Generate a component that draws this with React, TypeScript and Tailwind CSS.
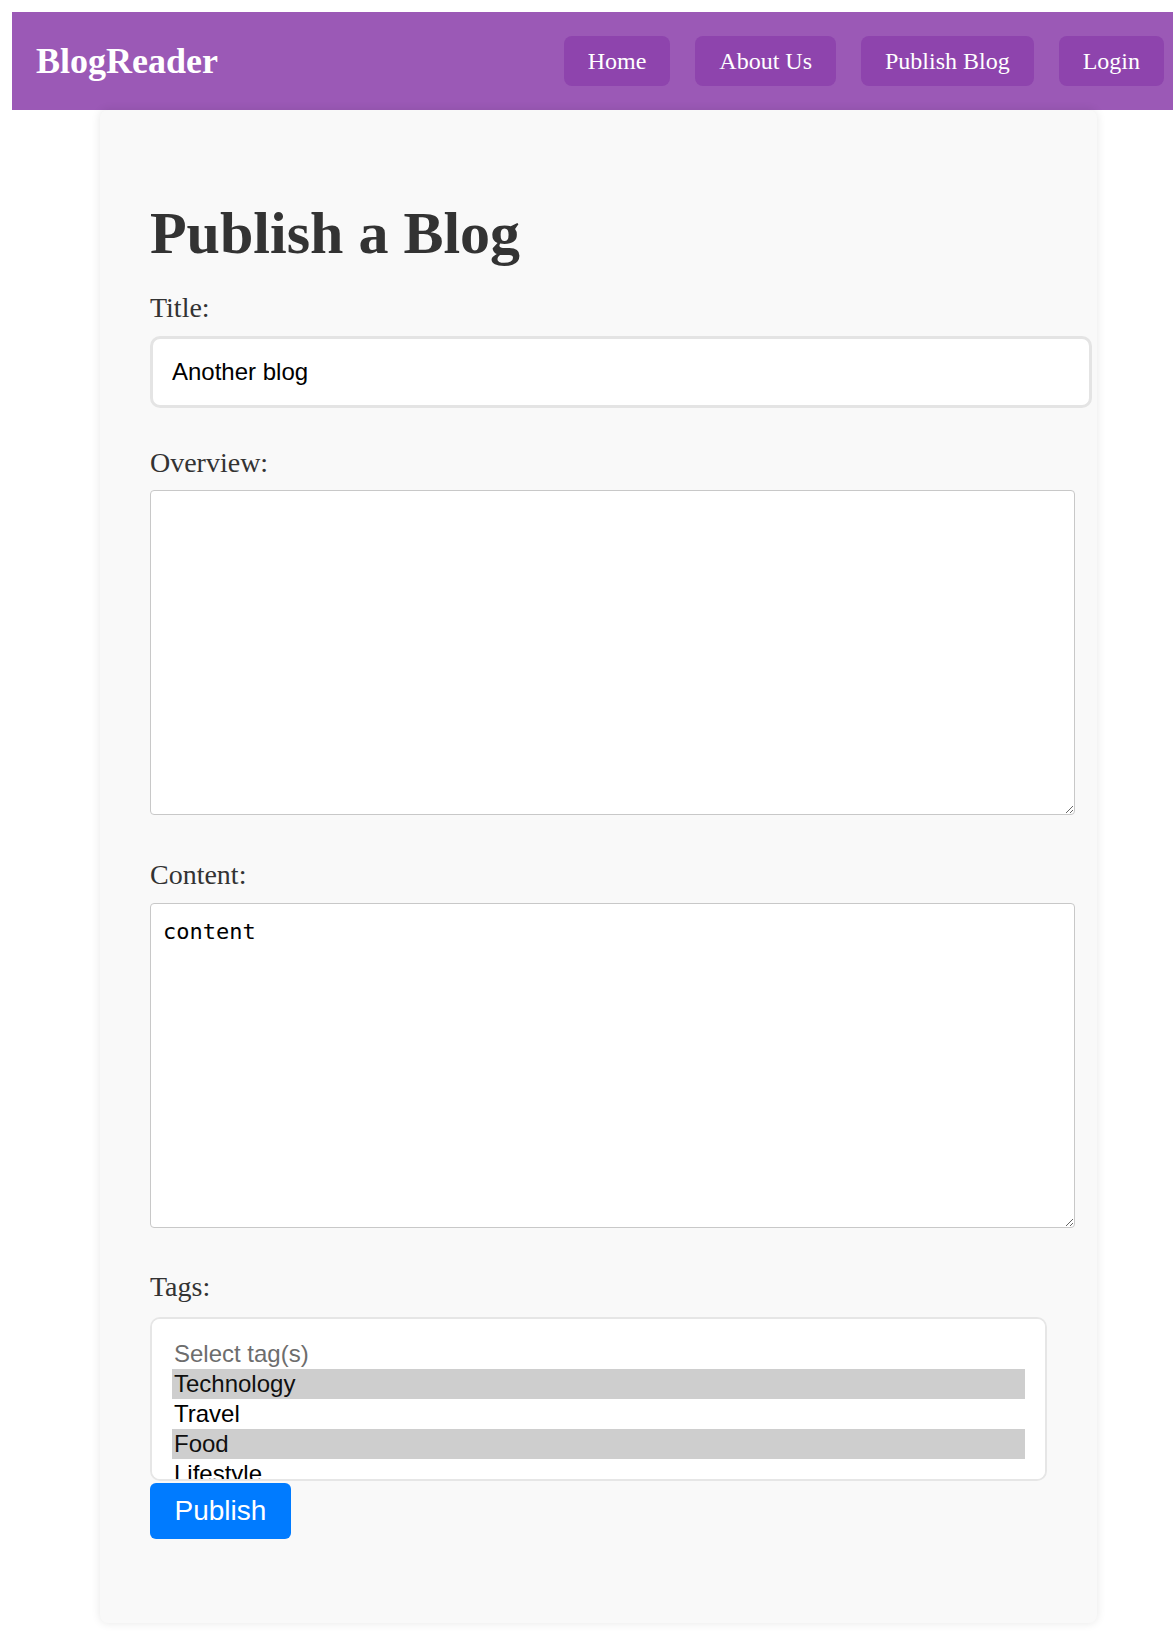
import { useState } from "react";

const LINKS = ["Home", "About Us", "Publish Blog", "Login"];

const TAGS = ["Technology", "Travel", "Food", "Lifestyle", "Health", "Education"];

export default function App() {
  const [title, setTitle] = useState("Another blog");
  const [overview, setOverview] = useState("");
  const [content, setContent] = useState("content");

  return (
    <div className="overflow-hidden bg-white">
      <div className="ml-3 mt-3 mb-3 w-full">
        {/* Top bar */}
        <nav className="flex items-center justify-between bg-[#9b59b6] py-6 pl-6 pr-[21px] font-['Liberation_Serif',serif] text-white">
          <span className="text-[36px] font-bold leading-[41px]">BlogReader</span>
          <div className="flex gap-[25px]">
            {LINKS.map(l => (
              <a
                key={l}
                href="#"
                className="rounded-lg bg-[#8e44ad] px-6 py-3 text-[24px] leading-[26px] text-white"
              >
                {l}
              </a>
            ))}
          </div>
        </nav>

        {/* Form card */}
        <div className="mx-auto w-[85%] rounded-lg bg-[#f9f9f9] px-[50px] pt-[93px] pb-[84px] shadow-[0_0_10px_rgba(0,0,0,0.1)]">
          <h1 className="font-['Liberation_Serif',serif] text-[60px] font-bold leading-[60px] text-[#333]">
            Publish a Blog
          </h1>

          <form className="flex flex-col font-['Liberation_Serif',serif] text-[#333]" onSubmit={e => e.preventDefault()}>
            <label htmlFor="title" className="mt-[29px] mb-[12px] block text-[28px] leading-[32px]">Title:</label>
            <input
              id="title"
              value={title}
              onChange={e => setTitle(e.target.value)}
              className="h-[72px] w-[942px] rounded-[10px] border-[3px] border-[#e4e4e4] bg-white px-[19px] font-['Liberation_Sans',Arial,sans-serif] text-[24px] text-black outline-none"
            />

            <label htmlFor="overview" className="mt-[39px] mb-[11px] block text-[28px] leading-[32px]">Overview:</label>
            <textarea
              id="overview"
              value={overview}
              onChange={e => setOverview(e.target.value)}
              className="block h-[325px] w-[925px] rounded-[4px] border border-[#c8c8c8] bg-white p-3 font-['DejaVu_Sans_Mono',monospace] text-[22px] text-black outline-none"
            />

            <label htmlFor="content" className="mt-[44px] mb-[12px] block text-[28px] leading-[32px]">Content:</label>
            <textarea
              id="content"
              value={content}
              onChange={e => setContent(e.target.value)}
              className="block h-[325px] w-[925px] rounded-[4px] border border-[#c8c8c8] bg-white px-3 pt-[15px] pb-3 font-['DejaVu_Sans_Mono',monospace] text-[22px] leading-[26px] text-black outline-none"
            />

            <label htmlFor="tags" className="mt-[43px] mb-[14px] block text-[28px] leading-[32px]">Tags:</label>
            <select
              id="tags"
              multiple
              defaultValue={["Technology", "Food"]}
              className="h-[164px] w-full rounded-[10px] border-2 border-[#e6e6e6] bg-white p-5 font-['Liberation_Sans',Arial,sans-serif] text-[24px] text-black outline-none [scrollbar-width:none]"
            >
              <option value="" disabled className="px-[2px] py-[1px] text-[#6d6d6d]">Select tag(s)</option>
              {TAGS.map(t => (
                <option key={t} value={t} className="px-[2px] py-[1px] checked:bg-[#cecece]">{t}</option>
              ))}
            </select>

            <button
              type="submit"
              className="mt-[2px] h-[56px] w-[141px] rounded-md bg-[#007bff] font-['Liberation_Sans',Arial,sans-serif] text-[28px] text-white"
            >
              Publish
            </button>
          </form>
        </div>
      </div>
    </div>
  );
}
